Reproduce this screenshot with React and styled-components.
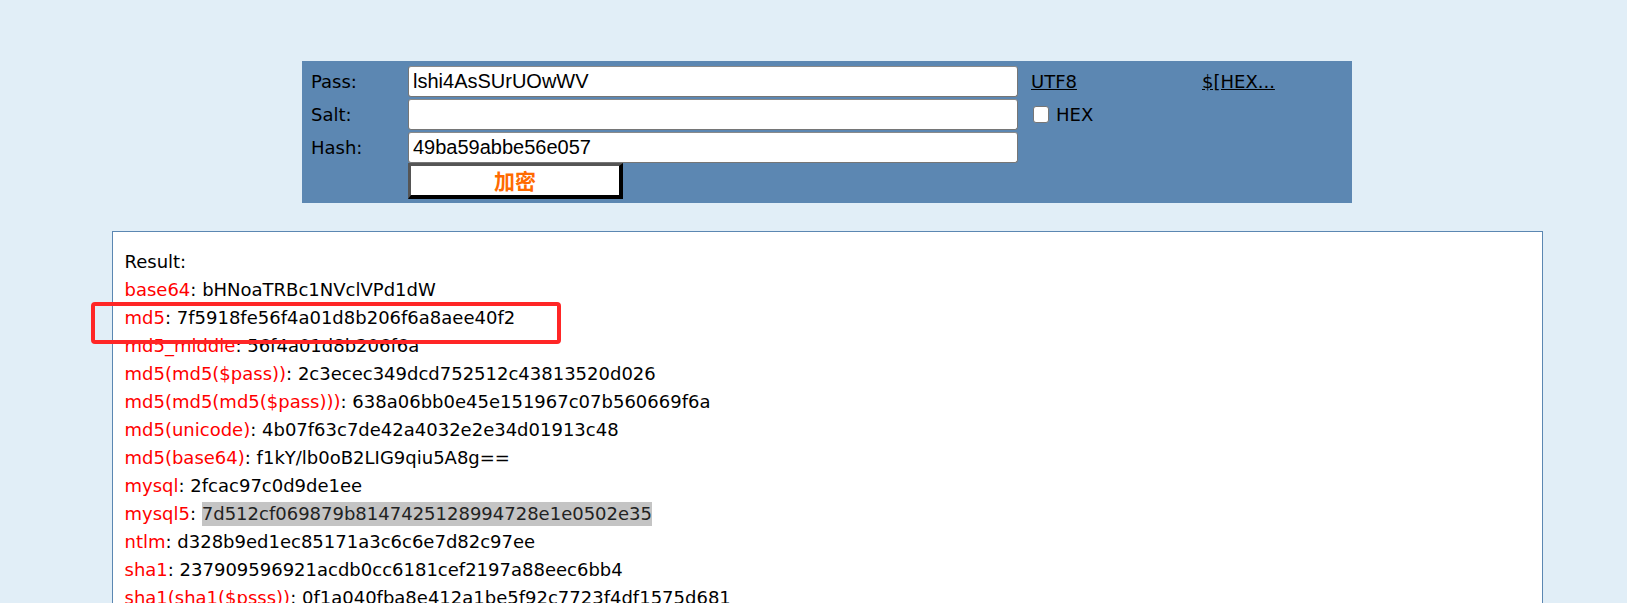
import React from "react";
import styled, { createGlobalStyle } from "styled-components";

const GlobalStyle = createGlobalStyle`
  html, body {
    margin: 0;
    padding: 0;
    background: #e1eef7;
    overflow: hidden;
  }
  body {
    font-family: "DejaVu Sans", Verdana, sans-serif;
    font-size: 18px;
    color: #000;
  }
`;

const Page = styled.div`
  padding: 61px 0 0 27px;
`;

const Panel = styled.div`
  width: 1050px;
  box-sizing: border-box;
  margin: 0 auto;
  background: #5c87b2;
  padding: 5px 0 7px 9px;
  display: grid;
  grid-template-columns: 97px 610px 171px 1fr;
  grid-auto-rows: 31px;
  row-gap: 2px;
  align-items: center;
`;

const Label = styled.div`
  font-size: 18px;
  line-height: 31px;
  color: #000;
`;

const TextInput = styled.input`
  box-sizing: border-box;
  width: 610px;
  height: 31px;
  border: 1px solid #767676;
  border-top-color: #8a8a8a;
  border-radius: 3px;
  background: #fff;
  padding: 0 4px;
  font-family: "Liberation Sans", Arial, sans-serif;
  font-size: 20px;
  color: #000;
  outline: none;
`;

const Side = styled.div`
  padding-left: 13px;
  display: flex;
  align-items: center;
  gap: 7px;
  font-size: 18px;
`;

const Link = styled.a`
  color: #000;
  text-decoration: underline;
  font-size: 18px;
  cursor: pointer;
`;

const Check = styled.input`
  appearance: none;
  margin: 0 0 0 2px;
  width: 16px;
  height: 17px;
  box-sizing: border-box;
  border: 1px solid #767676;
  border-radius: 3px;
  background: #fff;
`;

const ButtonRow = styled.div`
  grid-column: 2 / 3;
  height: 35px;
  align-self: start;
`;

const EncryptButton = styled.button`
  box-sizing: border-box;
  width: 215px;
  height: 36px;
  margin-top: -2px;
  background: #fff;
  border-style: solid;
  border-width: 3px 4px 4px 3px;
  border-color: #555 #000 #000 #555;
  font-family: "Noto Sans CJK SC", "DejaVu Sans", sans-serif;
  font-weight: 700;
  font-size: 21px;
  line-height: 1;
  color: #ff6a00;
  padding: 0;
  cursor: pointer;
`;

const ResultBox = styled.div`
  position: relative;
  width: 1431px;
  min-height: 420px;
  box-sizing: border-box;
  margin: 28px auto 0;
  background: #fff;
  border: 1px solid #5b87b2;
  padding: 16px 12px 15px;
`;

const Line = styled.div`
  line-height: 28px;
  white-space: nowrap;
  font-size: 18px;
`;

const Key = styled.span`
  color: #ff0000;
`;

const Selected = styled.span`
  display: inline-block;
  background: #c4c4c4;
  color: #222;
  line-height: 24px;
  vertical-align: top;
  margin-top: 2px;
`;

const Annotation = styled.div`
  position: absolute;
  left: -22px;
  top: 70px;
  width: 470px;
  height: 42px;
  box-sizing: border-box;
  border: 4px solid #ff2626;
  border-radius: 4px;
  pointer-events: none;
`;

const rows = [
  ["base64", "bHNoaTRBc1NVclVPd1dW"],
  ["md5", "7f5918fe56f4a01d8b206f6a8aee40f2"],
  ["md5_middle", "56f4a01d8b206f6a"],
  ["md5(md5($pass))", "2c3ecec349dcd752512c43813520d026"],
  ["md5(md5(md5($pass)))", "638a06bb0e45e151967c07b560669f6a"],
  ["md5(unicode)", "4b07f63c7de42a4032e2e34d01913c48"],
  ["md5(base64)", "f1kY/lb0oB2LIG9qiu5A8g=="],
  ["mysql", "2fcac97c0d9de1ee"],
  ["mysql5", "7d512cf069879b8147425128994728e1e0502e35", true],
  ["ntlm", "d328b9ed1ec85171a3c6c6e7d82c97ee"],
  ["sha1", "237909596921acdb0cc6181cef2197a88eec6bb4"],
  ["sha1(sha1($psss))", "0f1a040fba8e412a1be5f92c7723f4df1575d681"],
];

export default function App() {
  return (
    <>
      <GlobalStyle />
      <Page>
        <Panel>
          <Label>Pass:</Label>
          <TextInput defaultValue="lshi4AsSUrUOwWV" />
          <Side>
            <Link>UTF8</Link>
          </Side>
          <Side>
            <Link>$[HEX...</Link>
          </Side>

          <Label>Salt:</Label>
          <TextInput defaultValue="" />
          <Side>
            <Check type="checkbox" />
            <span>HEX</span>
          </Side>
          <div />

          <Label>Hash:</Label>
          <TextInput defaultValue="49ba59abbe56e057" />
          <div />
          <div />

          <ButtonRow>
            <EncryptButton>加密</EncryptButton>
          </ButtonRow>
        </Panel>

        <ResultBox>
          <Line>Result:</Line>
          {rows.map(([k, v, sel]) => (
            <Line key={k}>
              <Key>{k}</Key>:{" "}
              {sel ? <Selected>{v}</Selected> : v}
            </Line>
          ))}
          <Annotation />
        </ResultBox>
      </Page>
    </>
  );
}
